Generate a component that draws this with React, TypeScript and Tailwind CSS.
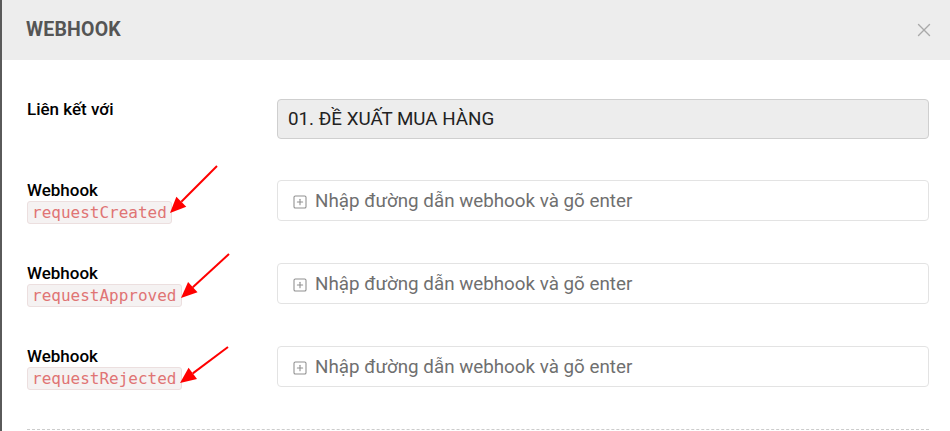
import { SquarePlus, X } from "lucide-react";

const hooks = ["requestCreated", "requestApproved", "requestRejected"];

const Arrow = ({ x1, y1, x2, y2 }: { x1: number; y1: number; x2: number; y2: number }) => {
  const ang = Math.atan2(y2 - y1, x2 - x1);
  const len = 16;
  const w = 7;
  const bx = x2 - len * Math.cos(ang);
  const by = y2 - len * Math.sin(ang);
  const px = -Math.sin(ang) * w;
  const py = Math.cos(ang) * w;
  return (
    <g>
      <line x1={x1} y1={y1} x2={bx} y2={by} stroke="#ff0000" strokeWidth={2} />
      <polygon points={`${x2},${y2} ${bx + px},${by + py} ${bx - px},${by - py}`} fill="#ff0000" />
    </g>
  );
};

const WebhookRow = ({ name, className }: { name: string; className: string }) => (
  <div className={`flex h-[41px] items-start ${className}`}>
    <div className="w-[250px] shrink-0">
      <div className="text-[17px] leading-[20px] font-medium text-black">Webhook</div>
      <span
        className="mt-[1px] inline-block rounded-[3px] border border-[#ecdfdf] bg-[#f5f2f2] px-[4px] text-[16px] leading-[21px] text-[#e07474]"
        style={{ fontFamily: '"DejaVu Sans Mono", monospace' }}
      >
        {name}
      </span>
    </div>
    <div className="flex h-[41px] flex-1 items-center rounded-[4px] border border-[#e3e3e3] bg-white pl-[14px] pt-[2px]">
      <SquarePlus size={16} strokeWidth={1.6} className="text-[#8f8f8f]" />
      <span className="ml-[7px] text-[18.8px] text-[#6f6f6f]">Nhập đường dẫn webhook và gõ enter</span>
    </div>
  </div>
);

export default function App() {
  return (
    <div className="flex h-[431px] w-[950px] overflow-hidden bg-white" style={{ fontFamily: "Roboto, sans-serif" }}>
      <div className="w-[2px] shrink-0 bg-[#5a5a5a]" />
      <div className="relative flex-1">
        <div className="flex h-[60px] items-center justify-between bg-[#ededed] pl-[24px] pr-[15px]">
          <h1 className="text-[19.5px] font-bold tracking-[0.2px] text-[#555]">WEBHOOK</h1>
          <X size={22} strokeWidth={1.5} className="text-[#a9a9a9]" />
        </div>
        <div className="pl-[25px] pr-[21px]">
          <div className="mt-[39px] flex h-[40px] items-start">
            <div className="w-[250px] shrink-0 text-[17px] leading-[20px] font-medium text-black">Liên kết với</div>
            <div className="flex h-[40px] flex-1 items-center rounded-[4px] border border-[#cfcfcf] bg-[#ededed] pl-[10px] text-[18.8px] text-[#222]">
              01. ĐỀ XUẤT MUA HÀNG
            </div>
          </div>
          <WebhookRow name={hooks[0]} className="mt-[41px]" />
          <WebhookRow name={hooks[1]} className="mt-[42px]" />
          <WebhookRow name={hooks[2]} className="mt-[42px]" />
          <div className="mt-[42px] border-t border-dashed border-[#cccccc]" />
        </div>
        <svg className="pointer-events-none absolute left-[-2px] top-0" width={950} height={431}>
          <Arrow x1={217} y1={166} x2={170} y2={213} />
          <Arrow x1={229} y1={254} x2={181} y2={298} />
          <Arrow x1={228} y1={347} x2={180} y2={383} />
        </svg>
      </div>
    </div>
  );
}
